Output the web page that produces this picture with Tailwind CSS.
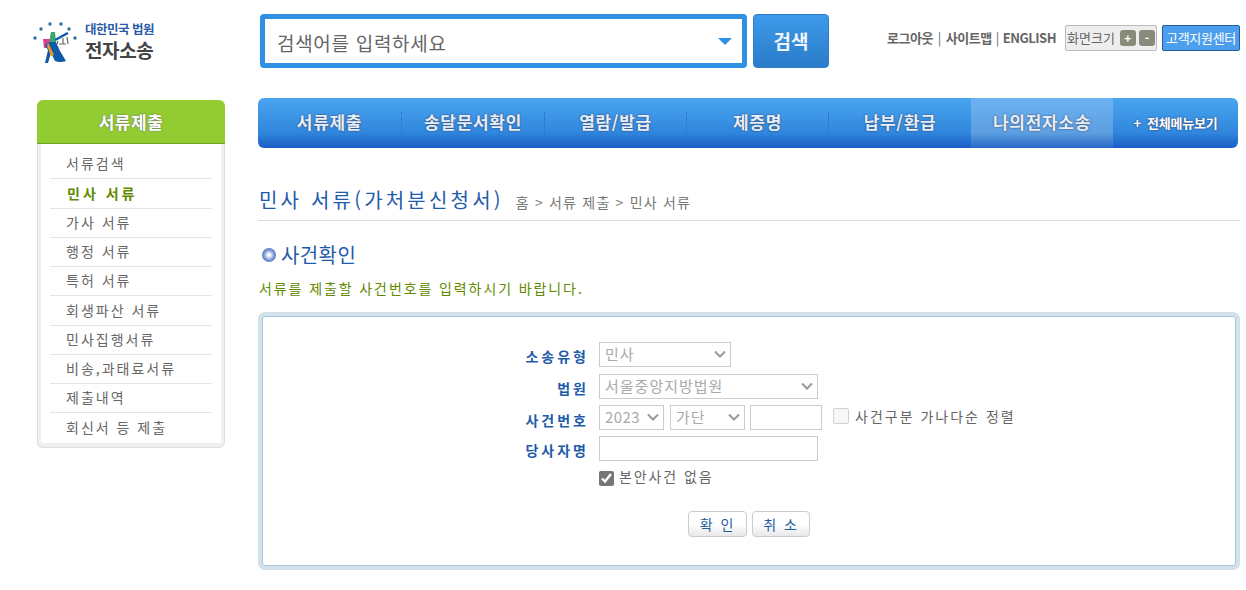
<!DOCTYPE html>
<html lang="ko">
<head>
    <meta charset="UTF-8">
    <title>전자소송</title>
    <script src="https://cdn.jsdelivr.net/npm/@tailwindcss/browser@4"></script>
</head>
<body class="bg-white font-['Noto_Sans_CJK_KR','Noto_Sans',sans-serif] text-[14px] text-[#666] overflow-hidden">
    <div class="w-[1246px] h-[590px]">
        <!-- top -->
        <header class="flex items-start h-[98px] pt-[14px]">
            <a class="flex items-center w-[227px] h-[54px] pl-[33px] shrink-0">
                <svg class="w-[46px] h-[46px] shrink-0" viewBox="0 0 46 46">
                    <g fill="#2a6f9e">
                        <circle cx="2" cy="20" r="1.7"/><circle cx="8" cy="11" r="1.7"/><circle cx="17" cy="6" r="1.7"/>
                        <circle cx="28" cy="6" r="1.7"/><circle cx="36" cy="11" r="1.7"/><circle cx="42" cy="20" r="1.7"/>
                    </g>
                    <path d="M18 14 L22 14 L23 25 L16 25 Z" fill="#3aa76d"/>
                    <path d="M10 21 H17 V30 H11 Z" fill="#d8409a"/>
                    <path d="M16 24 L23 24 L27 33 L33 43 Q27 45 22 43 L18 35 L15 45 H12 L15 32 L12 27 Z" fill="#0f5aa8"/>
                    <path d="M15 24 L21 37 L18 38 L14 28 Z" fill="#e8962a"/>
                    <path d="M22 22 L35 15" stroke="#0f5aa8" stroke-width="2.4"/>
                    <path d="M26 26 h7 M25 23 l-1 3 M30 20 v6 M34 19 l1 7" stroke="#666" stroke-width="1.2" fill="none"/>
                </svg>
                <div class="ml-[6px]">
                    <div class="text-[12.5px] font-bold leading-[17px] text-[#2a5ba8] tracking-[-0.5px] whitespace-nowrap">대한민국 법원</div>
                    <div class="text-[19px] font-bold leading-[25px] text-[#444] tracking-[-0.4px] whitespace-nowrap">전자소송</div>
                </div>
            </a>
            <div class="ml-[33px] w-[487px] h-[54px] bg-white border-[5px] border-[#2f90e4] rounded-[4px] flex items-center justify-between pl-[12px] pr-[10px] shrink-0">
                <span class="pt-[4px] text-[19px] tracking-[0.7px] text-[#666]">검색어를 입력하세요</span>
                <span class="w-0 h-0 border-x-[7px] border-x-transparent border-t-[7px] border-t-[#2f90e4]"></span>
            </div>
            <button class="ml-[6px] w-[76px] h-[54px] rounded-[4px] border border-[#2f7fca] bg-linear-to-b from-[#3e9aea] to-[#2a7cc9] text-[#eef5fb] text-[19px] font-bold shrink-0">검색</button>
            <div class="ml-[58px] mt-[11px] flex items-center text-[13px] font-bold text-[#666] tracking-[-0.5px] shrink-0">
                <span>로그아웃</span><span class="mx-[5px] font-normal">|</span><span>사이트맵</span><span class="mx-[4px] font-normal">|</span><span>ENGLISH</span>
                <div class="ml-[9px] flex items-center w-[92px] h-[26px] border border-[#bbb] rounded-[2px] bg-[#eee] pl-[1px] font-normal text-[13px] tracking-normal text-[#666]">
                    <span>화면크기</span>
                    <span class="ml-[5px] w-[16px] h-[16px] rounded-[3px] bg-[#8a8a7a] text-white text-[12px] leading-[15px] text-center font-bold">+</span>
                    <span class="ml-[3px] w-[16px] h-[16px] rounded-[3px] bg-[#8a8a7a] text-white text-[12px] leading-[15px] text-center font-bold">-</span>
                </div>
                <div class="ml-[5px] w-[78px] h-[26px] border border-[#1f5c9e] rounded-[2px] bg-[#4d9fee] text-white font-normal text-[13px] tracking-[-0.3px] leading-[24px] text-center whitespace-nowrap">고객지원센터</div>
            </div>
        </header>

        <div class="flex items-start pl-[37px]">
            <!-- left menu -->
            <aside class="w-[188px] mt-[2px] shrink-0">
                <h2 class="h-[44px] bg-[#92cc32] border-b border-[#6fa325] rounded-t-[6px] text-center text-white text-[17px] tracking-[0.5px] font-bold leading-[43px] [text-shadow:0_0_2px_#666]">서류제출</h2>
                <ul class="border border-t-0 border-[#ddd] rounded-b-[6px] px-[12px] pt-[6px] pb-[5px] shadow-[inset_3px_0_0_#f0f0f0,inset_-3px_0_0_#f0f0f0,inset_0_-4px_0_#f0f0f0] text-[14px] tracking-[2px] text-[#666] leading-[26px]">
                    <li class="h-[29px] pl-[16px] border-b border-[#e4e4e4]">서류검색</li>
                    <li class="h-[30px] pl-[17px] border-b border-[#e4e4e4] font-bold tracking-[3px] text-[#5f8a00] leading-[28px]">민사 서류</li>
                    <li class="h-[29px] pl-[16px] border-b border-[#e4e4e4]">가사 서류</li>
                    <li class="h-[29px] pl-[16px] border-b border-[#e4e4e4]">행정 서류</li>
                    <li class="h-[29px] pl-[16px] border-b border-[#e4e4e4]">특허 서류</li>
                    <li class="h-[30px] pl-[16px] border-b border-[#e4e4e4] leading-[28px]">회생파산 서류</li>
                    <li class="h-[29px] pl-[16px] border-b border-[#e4e4e4]">민사집행서류</li>
                    <li class="h-[29px] pl-[16px] border-b border-[#e4e4e4]">비송,과태료서류</li>
                    <li class="h-[29px] pl-[16px] border-b border-[#e4e4e4]">제출내역</li>
                    <li class="h-[29px] pl-[16px] leading-[28px]">회신서 등 제출</li>
                </ul>
            </aside>

            <main class="ml-[33px] w-[982px] shrink-0">
                <!-- gnb -->
                <nav class="flex w-[980px] h-[50px] rounded-[6px] overflow-hidden bg-linear-to-b from-[#4aa5f0] via-[#2f86dc] via-70% to-[#1c5dc6] text-[#e6eef7] text-[17px] tracking-[0.7px] font-bold [text-shadow:0_0_2px_#335]">
                    <a class="w-[144px] text-center my-[14px] leading-[20px] border-r border-dotted border-r-[#2a70b8]">서류제출</a>
                    <a class="w-[143px] text-center my-[14px] leading-[20px] border-r border-dotted border-r-[#2a70b8]">송달문서확인</a>
                    <a class="w-[142px] text-center my-[14px] leading-[20px] border-r border-dotted border-r-[#2a70b8]">열람/발급</a>
                    <a class="w-[142px] text-center my-[14px] leading-[20px] border-r border-dotted border-r-[#2a70b8]">제증명</a>
                    <a class="w-[142px] text-center my-[14px] leading-[20px]">납부/환급</a>
                    <a class="w-[142px] text-center leading-[48px] bg-linear-to-b from-[#6db2f2] via-[#5d9fe0] via-70% to-[#2a68c8]">나의전자소송</a>
                    <a class="flex-1 flex items-center justify-center gap-[6px] text-[13px] text-white tracking-[-0.2px]"><span>+</span>전체메뉴보기</a>
                </nav>

                <!-- title -->
                <div class="flex items-baseline w-[982px] h-[73px] pt-[37px] pl-[1px] border-b border-[#ddd]">
                    <h1 class="text-[20px] leading-[30px] tracking-[3.2px] text-[#1f5cab]">민사 서류(가처분신청서)</h1>
                    <span class="ml-[12px] text-[14px] tracking-[1.2px] text-[#777]">홈 &gt; 서류 제출 &gt; 민사 서류</span>
                </div>

                <h3 class="flex items-center mt-[21px] ml-[4px] text-[20px] leading-[26px] tracking-[0.4px] text-[#1f5cab]">
                    <span class="w-[14px] h-[14px] mr-[5px] rounded-full bg-[radial-gradient(circle,#fff_10%,#6f8fd0_55%,#4a66a8)]"></span>사건확인
                </h3>
                <p class="mt-[10px] ml-[1px] text-[14px] leading-[20px] tracking-[1.9px] text-[#5f8a00]">서류를 제출할 사건번호를 입력하시기 바랍니다.</p>

                <!-- form -->
                <form class="mt-[14px] w-[982px] h-[258px] border-[4px] border-[#d3e1ea] rounded-[7px] shadow-[inset_0_0_0_1px_#a9c6de] pt-[26px] text-[14px]">
                    <div class="grid grid-cols-[327px_1fr] gap-x-[10px] gap-y-[6px] items-start">
                        <label class="h-[26px] text-right text-[#1f5cab] font-bold tracking-[3px] leading-[28px]">소송유형</label>
                        <div class="h-[26px]">
                            <div class="relative w-[132px] h-[25px]">
                                <select disabled class="appearance-none w-full h-full pl-[5px] border border-[#ccc] bg-white text-[15px] tracking-[1px] text-[#aaa] opacity-100"><option>민사</option></select>
                                <svg class="absolute right-[5px] top-[8px] w-[12px] h-[8px] pointer-events-none" viewBox="0 0 12 8"><path d="M1 1.5 L6 6.5 L11 1.5" fill="none" stroke="#999" stroke-width="2"/></svg>
                            </div>
                        </div>
                        <label class="h-[25px] text-right text-[#1f5cab] font-bold tracking-[3px] leading-[29px]">법원</label>
                        <div class="relative w-[219px] h-[25px]">
                            <select disabled class="appearance-none w-full h-full pl-[5px] border border-[#ccc] bg-white text-[15px] tracking-[1px] text-[#aaa] opacity-100"><option>서울중앙지방법원</option></select>
                            <svg class="absolute right-[5px] top-[8px] w-[12px] h-[8px] pointer-events-none" viewBox="0 0 12 8"><path d="M1 1.5 L6 6.5 L11 1.5" fill="none" stroke="#999" stroke-width="2"/></svg>
                        </div>
                        <label class="h-[25px] text-right text-[#1f5cab] font-bold tracking-[3px] leading-[30px]">사건번호</label>
                        <div class="flex items-center h-[25px]">
                            <div class="relative w-[65px] h-[25px]">
                                <select disabled class="appearance-none w-full h-full pl-[5px] border border-[#ccc] bg-white text-[15px] tracking-[0.4px] text-[#aaa] opacity-100"><option>2023</option></select>
                                <svg class="absolute right-[5px] top-[8px] w-[12px] h-[8px] pointer-events-none" viewBox="0 0 12 8"><path d="M1 1.5 L6 6.5 L11 1.5" fill="none" stroke="#999" stroke-width="2"/></svg>
                            </div>
                            <div class="relative ml-[6px] w-[75px] h-[25px]">
                                <select disabled class="appearance-none w-full h-full pl-[5px] border border-[#ccc] bg-white text-[15px] tracking-[1px] text-[#aaa] opacity-100"><option>가단</option></select>
                                <svg class="absolute right-[5px] top-[8px] w-[12px] h-[8px] pointer-events-none" viewBox="0 0 12 8"><path d="M1 1.5 L6 6.5 L11 1.5" fill="none" stroke="#999" stroke-width="2"/></svg>
                            </div>
                            <input class="ml-[5px] w-[72px] h-[25px] border border-[#ccc]">
                            <input type="checkbox" disabled class="ml-[11px] -mt-[3px] w-[16px] h-[16px]">
                            <span class="ml-[6px] -mt-[3px] text-[#666] tracking-[2px]">사건구분 가나다순 정렬</span>
                        </div>
                        <label class="h-[25px] text-right text-[#1f5cab] font-bold tracking-[3px] leading-[29px]">당사자명</label>
                        <input class="w-[219px] h-[25px] border border-[#ccc]">
                        <div></div>
                        <label class="flex items-center h-[24px] -mt-[1px] -ml-[1px] text-[#666] tracking-[1.9px]"><input type="checkbox" checked class="ml-[1px] w-[15px] h-[15px] mr-[5px] accent-[#767676]"><span class="-mt-[3px]">본안사건 없음</span></label>
                    </div>
                    <div class="flex justify-center gap-[5px] mt-[21px]">
                        <button type="button" class="w-[59px] h-[26px] rounded-[4px] border border-[#ccc] bg-linear-to-b from-white via-white to-[#e8e8e8] text-[#1f5ca0] tracking-[2px]">확 인</button>
                        <button type="button" class="w-[58px] h-[26px] rounded-[4px] border border-[#ccc] bg-linear-to-b from-white via-white to-[#e8e8e8] text-[#1f5ca0] tracking-[2px]">취 소</button>
                    </div>
                </form>
            </main>
        </div>
    </div>
</body>
</html>
